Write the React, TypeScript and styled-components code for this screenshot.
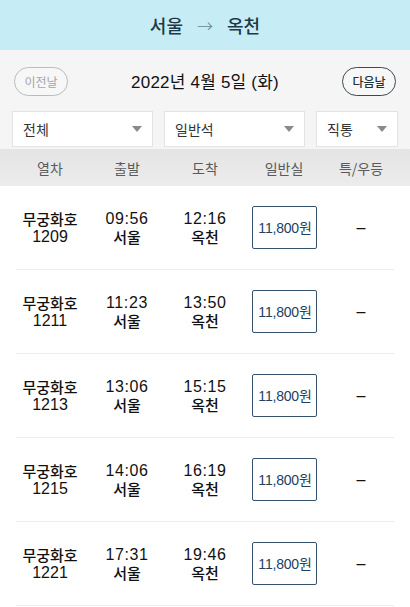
import styled, { createGlobalStyle } from 'styled-components';

interface Train {
  name: string;
  no: string;
  dep: string;
  arr: string;
  price: string;
}

const trains: Train[] = [
  { name: '무궁화호', no: '1209', dep: '09:56', arr: '12:16', price: '11,800원' },
  { name: '무궁화호', no: '1211', dep: '11:23', arr: '13:50', price: '11,800원' },
  { name: '무궁화호', no: '1213', dep: '13:06', arr: '15:15', price: '11,800원' },
  { name: '무궁화호', no: '1215', dep: '14:06', arr: '16:19', price: '11,800원' },
  { name: '무궁화호', no: '1221', dep: '17:31', arr: '19:46', price: '11,800원' },
];

const GlobalStyle = createGlobalStyle`
  html, body {
    margin: 0;
    padding: 0;
    background: #fff;
    font-family: "Liberation Sans", "Noto Sans CJK KR", sans-serif;
  }
`;

const Page = styled.div`
  width: 410px;
  height: 607px;
  overflow: hidden;
  background: #fff;
`;

const Header = styled.header`
  height: 50px;
  background: #c6edf5;
  display: flex;
  align-items: center;
  justify-content: center;
  gap: 14px;
  font-family: "Noto Sans CJK KR", sans-serif;
  font-size: 18px;
  font-weight: 500;
  color: #1e3848;
`;

const Arrow = styled.span`
  color: #6d8794;
  font-weight: 300;
  font-size: 16px;
`;

const DateBar = styled.div`
  height: 60px;
  background: #f5f5f5;
  display: flex;
  align-items: center;
  justify-content: space-between;
  padding: 0 14px;
`;

const DayButton = styled.button<{ active?: boolean }>`
  width: 54px;
  height: 29px;
  border-radius: 15px;
  border: 1px solid ${({ active }) => (active ? '#3a4a52' : '#b8bcbf')};
  background: #f7f7f7;
  color: ${({ active }) => (active ? '#23323a' : '#a2a6a9')};
  font-family: "Noto Sans CJK KR", sans-serif;
  font-size: 12px;
  font-weight: ${({ active }) => (active ? 500 : 400)};
  padding: 0;
  margin-top: 2px;
`;

const DateText = styled.div`
  font-size: 17px;
  color: #111;
  letter-spacing: 0.2px;
`;

const Filters = styled.div`
  background: #f5f5f5;
  display: grid;
  grid-template-columns: 141px 141px 82px;
  gap: 11px;
  padding: 1px 12px 2px;
`;

const Select = styled.div`
  height: 36px;
  background: #fff;
  border: 1px solid #e3e3e3;
  display: flex;
  align-items: center;
  justify-content: space-between;
  padding: 0 10px;
  font-family: "Noto Sans CJK KR", sans-serif;
  font-size: 14px;
  color: #333;
  box-sizing: border-box;
`;

const Caret = styled.span`
  width: 0;
  height: 0;
  border-left: 5px solid transparent;
  border-right: 5px solid transparent;
  border-top: 6px solid #8a8a8a;
`;

const columns = '68px 86px 70px 88px 66px';

const HeadRow = styled.div`
  height: 37px;
  background: linear-gradient(#e4e4e4, #ececec);
  display: grid;
  grid-template-columns: ${columns};
  padding-left: 16px;
  align-items: center;
  font-family: "Noto Sans CJK KR", sans-serif;
  font-size: 14px;
  color: #5a5a5a;
  text-align: center;
`;

const Row = styled.div`
  height: 83px;
  display: grid;
  grid-template-columns: ${columns};
  align-items: center;
  text-align: center;
  border-bottom: 1px solid #ececec;
  margin: 0 16px;
`;

const Cell = styled.div`
  display: flex;
  flex-direction: column;
  align-items: center;
  font-size: 16px;
  line-height: 18px;
  color: #111;
`;

const KoText = styled.span`
  font-family: "Noto Sans CJK KR", sans-serif;
  font-size: 15px;
  font-weight: 500;
`;

const Time = styled.span`
  letter-spacing: 0.6px;
`;

const PriceBox = styled.div`
  width: 61px;
  height: 41px;
  border: 1px solid #36516b;
  border-radius: 2px;
  display: flex;
  align-items: center;
  justify-content: center;
  font-size: 14px;
  color: #23405e;
  padding-left: 2px;
  letter-spacing: -0.2px;
`;

const Dash = styled.span`
  font-size: 16px;
  color: #111;
`;

export default function App() {
  return (
    <Page>
      <GlobalStyle />
      <Header>
        <span>서울</span>
        <Arrow>→</Arrow>
        <span>옥천</span>
      </Header>
      <DateBar>
        <DayButton>이전날</DayButton>
        <DateText>2022년 4월 5일 (화)</DateText>
        <DayButton active>다음날</DayButton>
      </DateBar>
      <Filters>
        <Select>
          전체
          <Caret />
        </Select>
        <Select>
          일반석
          <Caret />
        </Select>
        <Select>
          직통
          <Caret />
        </Select>
      </Filters>
      <HeadRow>
        <span>열차</span>
        <span>출발</span>
        <span>도착</span>
        <span>일반실</span>
        <span>특/우등</span>
      </HeadRow>
      {trains.map((t) => (
        <Row key={t.no}>
          <Cell>
            <KoText>{t.name}</KoText>
            <span>{t.no}</span>
          </Cell>
          <Cell>
            <Time>{t.dep}</Time>
            <KoText>서울</KoText>
          </Cell>
          <Cell>
            <Time>{t.arr}</Time>
            <KoText>옥천</KoText>
          </Cell>
          <Cell>
            <PriceBox>{t.price}</PriceBox>
          </Cell>
          <Cell>
            <Dash>–</Dash>
          </Cell>
        </Row>
      ))}
    </Page>
  );
}
